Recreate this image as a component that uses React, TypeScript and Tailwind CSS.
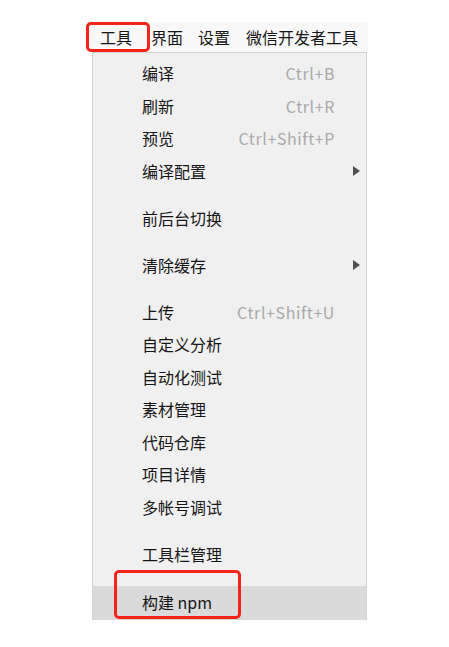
import React from 'react';

type Item =
  | { kind: 'item'; label: string; shortcut?: string; submenu?: boolean; active?: boolean }
  | { kind: 'sep' };

const items: Item[] = [
  { kind: 'item', label: '编译', shortcut: 'Ctrl+B' },
  { kind: 'item', label: '刷新', shortcut: 'Ctrl+R' },
  { kind: 'item', label: '预览', shortcut: 'Ctrl+Shift+P' },
  { kind: 'item', label: '编译配置', submenu: true },
  { kind: 'sep' },
  { kind: 'item', label: '前后台切换' },
  { kind: 'sep' },
  { kind: 'item', label: '清除缓存', submenu: true },
  { kind: 'sep' },
  { kind: 'item', label: '上传', shortcut: 'Ctrl+Shift+U' },
  { kind: 'item', label: '自定义分析' },
  { kind: 'item', label: '自动化测试' },
  { kind: 'item', label: '素材管理' },
  { kind: 'item', label: '代码仓库' },
  { kind: 'item', label: '项目详情' },
  { kind: 'item', label: '多帐号调试' },
  { kind: 'sep' },
  { kind: 'item', label: '工具栏管理' },
  { kind: 'sep' },
  { kind: 'item', label: '构建 npm', active: true },
];

const MenuRow: React.FC<{ item: Extract<Item, { kind: 'item' }> }> = ({ item }) => (
  <div
    className={`relative flex items-center pl-[49px] leading-none ${
      item.active ? 'h-[34px] bg-[#dadada] pb-[2px]' : 'h-[32.5px] pb-[2px]'
    }`}
  >
    <span className="flex-1 text-[16px] text-[#161616]">{item.label}</span>
    {item.shortcut && (
      <span className="text-[16px] tracking-[0.6px] text-[#a9a9a9]">{item.shortcut}</span>
    )}
    <span className="w-[31px] flex justify-end pr-[6px]">
      {item.submenu && (
        <span className="w-0 h-0 border-y-[5px] border-y-transparent border-l-[7px] border-l-[#505050]" />
      )}
    </span>
    {item.active && (
      <span className="absolute left-[21px] top-[-16px] w-[127px] h-[49px] border-[3px] border-[#f5241a] rounded-[5px] pointer-events-none" />
    )}
  </div>
);

export default function App() {
  return (
    <div
      className="w-[449px] h-[647px] bg-white pt-[22px]"
      style={{ fontFamily: '"Noto Sans CJK SC", "Noto Sans", sans-serif' }}
    >
      <div className="relative ml-[88px] w-[280px] h-[30px] bg-[#f8f8f8] flex items-center pl-[12px] text-[16px] text-[#161616] leading-none">
        <span>工具</span>
        <span className="ml-[19px]">界面</span>
        <span className="ml-[15px]">设置</span>
        <span className="ml-[16px]">微信开发者工具</span>
        <span className="absolute left-[-2px] top-0 w-[64px] h-[30px] border-[3px] border-[#f5241a] rounded-[5px]" />
      </div>
      <div className="ml-[92px] w-[275px] bg-[#f0f0f0] border border-[#d2d2d2] border-b-0 pt-[5px]">
        {items.map((it, i) =>
          it.kind === 'sep' ? (
            <div key={i} className="h-[14.5px]" />
          ) : (
            <MenuRow key={i} item={it} />
          )
        )}
      </div>
    </div>
  );
}
